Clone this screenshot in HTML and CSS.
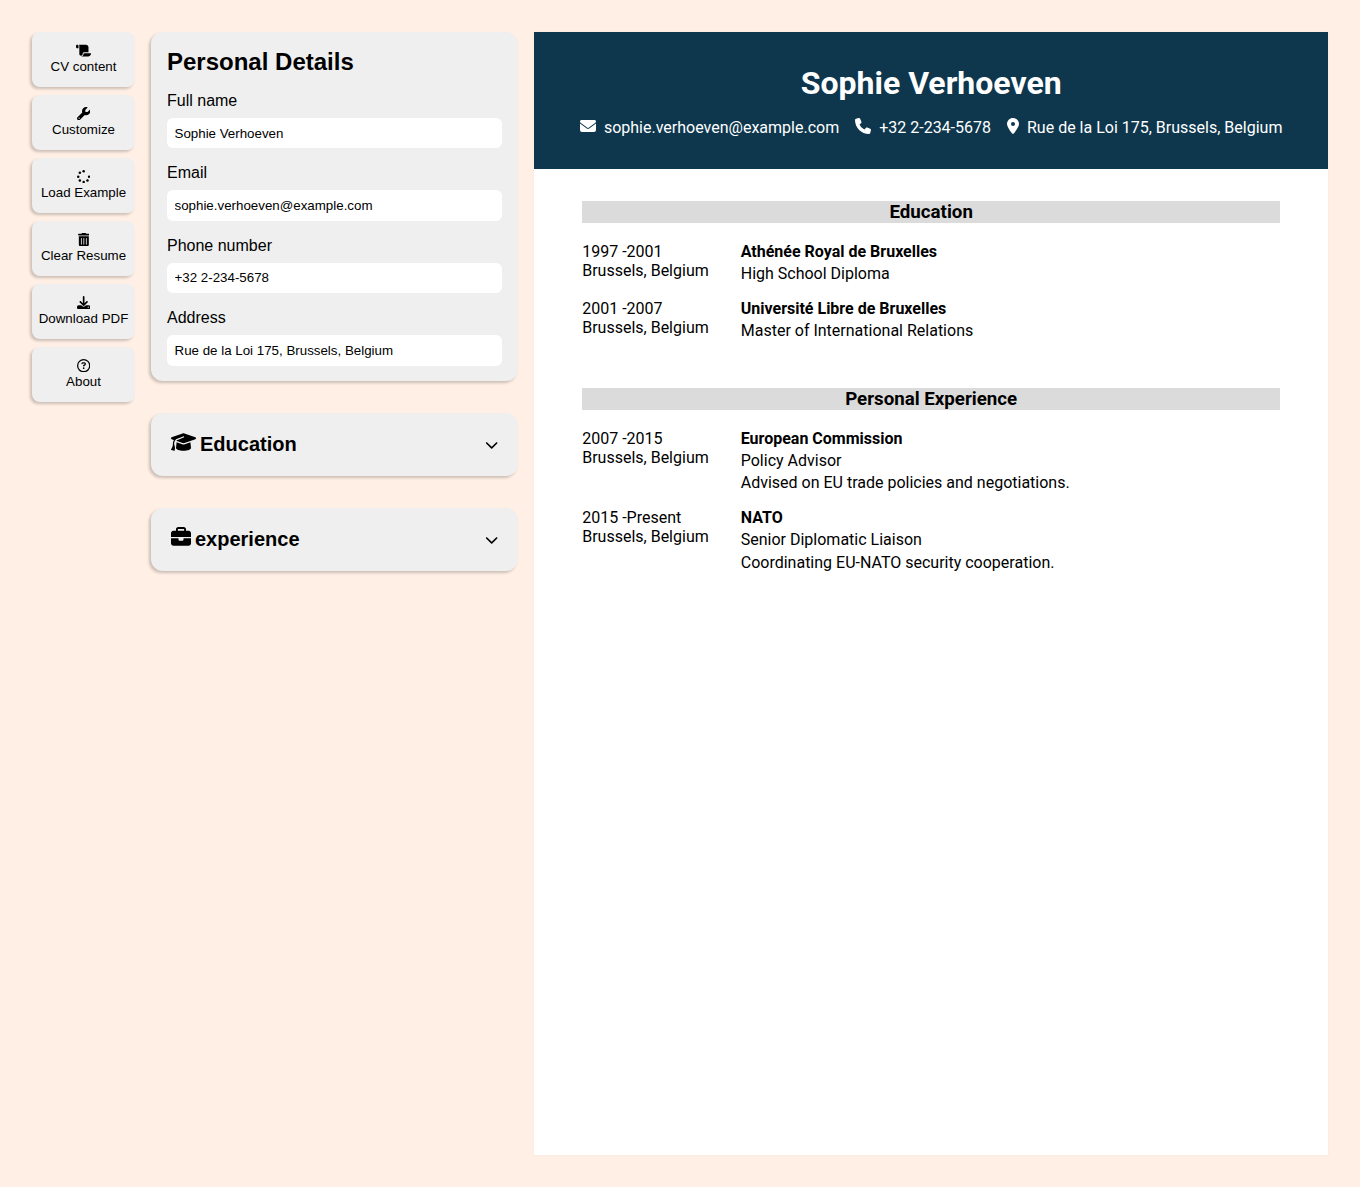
FILE: index.html
```html
<!DOCTYPE html>
<html lang="en">
<head>
<meta charset="utf-8">
<title>CV Builder</title>
<link rel="stylesheet" href="styles.css">
</head>
<body>
<div class="app">
  <nav class="sidebar">
    <button class="nav-button"><svg viewBox="0 0 576 512"><path d="M0 80v48c0 17.700 14.300 32 32 32H96V80c0-26.500-21.500-48-48-48S0 53.500 0 80zM112 32c10 13.400 16 30 16 48V384c0 35.300 28.700 64 64 64s64-28.700 64-64v-5.300c0-32.400 26.300-58.700 58.700-58.700H480V128c0-53-43-96-96-96H112zM464 480c61.900 0 112-50.100 112-112c0-8.800-7.200-16-16-16H314.700c-14.700 0-26.700 11.900-26.700 26.700V384c0 53-43 96-96 96H464z"/></svg>CV content</button>
    <button class="nav-button"><svg viewBox="0 0 512 512"><path d="M352 320c88.400 0 160-71.600 160-160c0-15.300-2.200-30.100-6.200-44.200c-3.100-10.800-16.400-13.200-24.300-5.300l-76.800 76.800c-3 3-7.100 4.700-11.300 4.700H336c-8.800 0-16-7.200-16-16V118.600c0-4.200 1.700-8.300 4.700-11.300l76.800-76.800c7.900-7.900 5.400-21.200-5.300-24.300C382.100 2.200 367.300 0 352 0C263.600 0 192 71.600 192 160c0 19.100 3.400 37.500 9.500 54.500L19.900 396.100C7.200 408.800 0 426.100 0 444.100C0 481.600 30.400 512 67.900 512c18 0 35.300-7.200 48-19.900L297.500 310.500c17 6.200 35.400 9.500 54.500 9.500zM80 408a24 24 0 1 1 0 48 24 24 0 1 1 0-48z"/></svg>Customize</button>
    <button class="nav-button"><svg viewBox="0 0 512 512"><circle cx="256" cy="48" r="48"/><circle cx="464" cy="256" r="48"/><circle cx="403" cy="403" r="48"/><circle cx="256" cy="464" r="48"/><circle cx="109" cy="403" r="48"/><circle cx="48" cy="256" r="48"/><circle cx="109" cy="109" r="48"/></svg>Load Example</button>
    <button class="nav-button"><svg viewBox="0 0 448 512"><path d="M135.200 17.700C140.600 6.800 151.700 0 163.800 0H284.200c12.100 0 23.200 6.800 28.600 17.700L320 32h96c17.700 0 32 14.300 32 32s-14.300 32-32 32H32C14.300 96 0 81.700 0 64S14.300 32 32 32h96l7.200-14.300zM32 128H416V448c0 35.300-28.700 64-64 64H96c-35.300 0-64-28.700-64-64V128zm96 64c-8.800 0-16 7.200-16 16V432c0 8.800 7.200 16 16 16s16-7.200 16-16V208c0-8.800-7.200-16-16-16zm96 0c-8.800 0-16 7.200-16 16V432c0 8.800 7.200 16 16 16s16-7.200 16-16V208c0-8.800-7.200-16-16-16zm96 0c-8.800 0-16 7.200-16 16V432c0 8.800 7.200 16 16 16s16-7.200 16-16V208c0-8.800-7.200-16-16-16z"/></svg>Clear Resume</button>
    <button class="nav-button"><svg viewBox="0 0 512 512"><path d="M288 32c0-17.700-14.300-32-32-32s-32 14.300-32 32V274.700l-73.400-73.400c-12.500-12.500-32.800-12.500-45.300 0s-12.500 32.800 0 45.300l128 128c12.500 12.500 32.800 12.500 45.300 0l128-128c12.500-12.500 12.500-32.800 0-45.300s-32.800-12.500-45.300 0L288 274.700V32zM64 352c-35.300 0-64 28.700-64 64v32c0 35.300 28.700 64 64 64H448c35.300 0 64-28.700 64-64V416c0-35.300-28.700-64-64-64H346.500l-45.300 45.300c-25 25-65.500 25-90.500 0L165.500 352H64zm368 56a24 24 0 1 1 0 48 24 24 0 1 1 0-48z"/></svg>Download PDF</button>
    <button class="nav-button"><svg viewBox="0 0 512 512"><path d="M464 256A208 208 0 1 0 48 256a208 208 0 1 0 416 0zM0 256a256 256 0 1 1 512 0A256 256 0 1 1 0 256zm169.800-90.700c7.900-22.300 29.100-37.300 52.800-37.300h58.300c34.900 0 63.100 28.300 63.100 63.100c0 22.600-12.100 43.500-31.700 54.800L280 264.400c-.2 13-10.900 23.600-24 23.600c-13.300 0-24-10.700-24-24V250.500c0-8.600 4.600-16.500 12.100-20.800l44.300-25.400c4.700-2.700 7.600-7.700 7.600-13.100c0-8.400-6.800-15.100-15.100-15.100H222.600c-3.400 0-6.400 2.100-7.500 5.300l-.4 1.200c-4.400 12.500-18.200 19-30.600 14.600s-19-18.200-14.600-30.600l.4-1.200zM224 352a32 32 0 1 1 64 0 32 32 0 1 1-64 0z"/></svg>About</button>
  </nav>

  <main class="editor">
    <section class="card details">
      <h2>Personal Details</h2>
      <form class="fields">
        <label class="field">Full name<input type="text" value="Sophie Verhoeven"></label>
        <label class="field">Email<input type="text" value="sophie.verhoeven@example.com"></label>
        <label class="field">Phone number<input type="text" value="+32 2-234-5678"></label>
        <label class="field">Address<input type="text" value="Rue de la Loi 175, Brussels, Belgium"></label>
      </form>
    </section>
    <section class="card toggle">
      <svg class="cap" viewBox="0 0 640 512"><path d="M320 32c-8.100 0-16.100 1.400-23.700 4.100L15.800 137.400C6.300 140.900 0 149.900 0 160s6.300 19.100 15.800 22.600l57.900 20.900C57.300 229.300 48 259.800 48 291.900v28.100c0 28.400-10.800 57.700-22.300 80.800c-6.500 13-13.900 25.800-22.500 37.600C0 442.700-.9 448.300 .9 453.400s6 8.900 11.200 10.200l64 16c4.200 1.100 8.700 .3 12.400-2s6.300-6.100 7.100-10.400c8.600-42.800 4.300-81.200-2.100-108.700C90.300 344.300 86 329.800 80 316.500V291.900c0-30.200 10.200-58.700 27.900-81.500c12.900-15.500 29.600-28 49.200-35.700l157-61.700c8.200-3.200 17.500 .8 20.700 9s-.8 17.500-9 20.700l-157 61.700c-12.400 4.900-23.300 12.400-32.200 21.600l159.600 57.600c7.600 2.700 15.600 4.100 23.700 4.100s16.100-1.400 23.700-4.100L624.200 182.600c9.500-3.400 15.800-12.500 15.800-22.600s-6.300-19.100-15.800-22.600L343.700 36.100C336.100 33.400 328.100 32 320 32zM128 408c0 35.300 86 72 192 72s192-36.700 192-72L496.700 262.600 354.500 314c-11.100 4-22.800 6-34.500 6s-23.500-2-34.500-6L143.300 262.600 128 408z"/></svg>
      <h3>Education</h3>
      <svg class="chevron" viewBox="0 0 512 512"><path d="M233.400 406.600c12.500 12.500 32.800 12.500 45.300 0l192-192c12.500-12.500 12.500-32.800 0-45.300s-32.800-12.500-45.300 0L256 338.700 86.600 169.400c-12.500-12.500-32.800-12.500-45.300 0s-12.500 32.800 0 45.300l192 192z"/></svg>
    </section>
    <section class="card toggle">
      <svg class="briefcase" viewBox="0 0 512 512"><path d="M184 48H328c4.400 0 8 3.600 8 8V96H176V56c0-4.400 3.600-8 8-8zm-56 8V96H64C28.700 96 0 124.700 0 160v96H192 320 512V160c0-35.300-28.700-64-64-64H384V56c0-30.900-25.100-56-56-56H184c-30.900 0-56 25.100-56 56zM512 288H320v32c0 17.700-14.300 32-32 32H224c-17.700 0-32-14.300-32-32V288H0V416c0 35.300 28.700 64 64 64H448c35.300 0 64-28.700 64-64V288z"/></svg>
      <h3>experience</h3>
      <svg class="chevron" viewBox="0 0 512 512"><path d="M233.400 406.600c12.500 12.500 32.800 12.500 45.300 0l192-192c12.500-12.500 12.500-32.800 0-45.300s-32.800-12.500-45.300 0L256 338.700 86.600 169.400c-12.500-12.500-32.800-12.500-45.300 0s-12.500 32.800 0 45.300l192 192z"/></svg>
    </section>
  </main>

  <article class="resume">
    <header class="resume-header">
      <h1>Sophie Verhoeven</h1>
      <div class="contacts">
        <div class="contact"><svg class="icon-wide" viewBox="0 0 512 512"><path d="M48 64C21.500 64 0 85.500 0 112c0 15.100 7.100 29.300 19.200 38.400L236.800 313.600c11.400 8.500 27 8.500 38.400 0L492.800 150.400c12.100-9.100 19.200-23.300 19.200-38.400c0-26.500-21.500-48-48-48H48zM0 176V384c0 35.300 28.700 64 64 64H448c35.300 0 64-28.700 64-64V176L294.400 339.200c-22.800 17.100-54 17.100-76.800 0L0 176z"/></svg><span>sophie.verhoeven@example.com</span></div>
        <div class="contact"><svg class="icon-wide" viewBox="0 0 512 512"><path d="M164.900 24.600c-7.700-18.600-28-28.500-47.400-23.200l-88 24C12.100 30.200 0 46 0 64C0 311.400 200.600 512 448 512c18 0 33.800-12.100 38.600-29.500l24-88c5.300-19.400-4.600-39.700-23.200-47.400l-96-40c-16.300-6.800-35.200-2.100-46.300 11.600L304.700 368C234.300 334.700 177.300 277.700 144 207.300L193.300 167c13.700-11.200 18.400-30 11.600-46.300l-40-96z"/></svg><span>+32 2-234-5678</span></div>
        <div class="contact"><svg class="icon-pin" viewBox="0 0 384 512"><path d="M215.700 499.200C267 435 384 279.400 384 192C384 86 298 0 192 0S0 86 0 192c0 87.400 117 243 168.300 307.200c12.300 15.300 35.100 15.300 47.400 0zM192 128a64 64 0 1 1 0 128 64 64 0 1 1 0-128z"/></svg><span>Rue de la Loi 175, Brussels, Belgium</span></div>
      </div>
    </header>
    <div class="resume-body">
      <section>
        <h3 class="bar">Education</h3>
        <div class="entries">
          <div class="entry">
            <div>1997 -2001<br>Brussels, Belgium</div>
            <div class="info"><strong>Athénée Royal de Bruxelles</strong><span>High School Diploma</span></div>
          </div>
          <div class="entry">
            <div>2001 -2007<br>Brussels, Belgium</div>
            <div class="info"><strong>Université Libre de Bruxelles</strong><span>Master of International Relations</span></div>
          </div>
        </div>
      </section>
      <section>
        <h3 class="bar">Personal Experience</h3>
        <div class="entries">
          <div class="entry">
            <div>2007 -2015<br>Brussels, Belgium</div>
            <div class="info"><strong>European Commission</strong><span>Policy Advisor</span><span>Advised on EU trade policies and negotiations.</span></div>
          </div>
          <div class="entry">
            <div>2015 -Present<br>Brussels, Belgium</div>
            <div class="info"><strong>NATO</strong><span>Senior Diplomatic Liaison</span><span>Coordinating EU-NATO security cooperation.</span></div>
          </div>
        </div>
      </section>
    </div>
  </article>
</div>
</body>
</html>
```
FILE: styles.css
```css
* {
  box-sizing: border-box;
  margin: 0;
  padding: 0;
}

body {
  background: #ffefe4;
  color: #000;
  font-family: "Liberation Sans", Arial, sans-serif;
  font-size: 16px;
}

svg {
  display: block;
  flex: none;
  fill: currentColor;
}

.app {
  display: grid;
  grid-template-columns: 103px 367.2px 794px;
  gap: 16px;
  align-items: start;
  padding: 32px;
}

.sidebar {
  display: flex;
  flex-direction: column;
  gap: 8px;
}

.nav-button {
  display: flex;
  flex-direction: column;
  align-items: center;
  height: 55px;
  padding-top: 12px;
  border: 0;
  border-radius: 8px;
  background: #efefef;
  box-shadow: -2px 2px 3px rgba(0, 0, 0, 0.2);
  color: #000;
  font: 13.333px/15px "Liberation Sans", Arial, sans-serif;
  white-space: nowrap;
}

.nav-button svg {
  height: 13.333px;
  margin-bottom: 1.667px;
}

.editor {
  display: flex;
  flex-direction: column;
  gap: 32px;
}

.card {
  border-radius: 12px;
  background: #efefef;
  box-shadow: -2px 2px 3px rgba(0, 0, 0, 0.2);
}

.details {
  padding: 16px 16px 15px;
}

.details h2 {
  margin-bottom: 17px;
  font-size: 24px;
  line-height: 27px;
}

.fields {
  display: flex;
  flex-direction: column;
  gap: 16px;
}

.field {
  display: flex;
  flex-direction: column;
  gap: 8px;
  line-height: 18px;
}

.field input {
  height: 30.4px;
  padding: 0 7.5px;
  border: 0;
  border-radius: 6px;
  background: #fff;
  color: #000;
  font: 13.333px "Liberation Sans", Arial, sans-serif;
}

.toggle {
  display: flex;
  align-items: center;
  gap: 4px;
  height: 63px;
  padding: 0 20px;
}

.toggle h3 {
  font-size: 20px;
  line-height: 23px;
}

.cap {
  width: 25px;
  height: 20px;
  margin-bottom: 4px;
}

.briefcase {
  width: 20px;
  height: 20px;
  margin-bottom: 4px;
}

.chevron {
  width: 13.333px;
  height: 13.333px;
  margin: 2px 0 0 auto;
}

.resume {
  height: 1123px;
  background: #fff;
  box-shadow: 0 0 3px rgba(0, 0, 0, 0.04);
  font-family: Roboto, sans-serif;
  line-height: 19px;
}

.resume-header {
  display: flex;
  flex-direction: column;
  align-items: center;
  gap: 16px;
  height: 137px;
  padding-top: 32px;
  background: #0e374e;
  color: #fff;
}

.resume-header h1 {
  font-size: 32px;
  line-height: 38px;
}

.contacts {
  display: flex;
  gap: 16px;
}

.contact {
  display: flex;
  align-items: flex-start;
  gap: 8px;
}

.icon-wide {
  width: 16px;
  height: 16px;
}

.icon-pin {
  width: 12px;
  height: 16px;
}

.resume-body {
  display: flex;
  flex-direction: column;
  gap: 48px;
  padding: 32px 48px;
}

.bar {
  margin-bottom: 18.72px;
  background: #dbdbdb;
  font-size: 18.72px;
  line-height: 22px;
  text-align: center;
}

.entries {
  display: flex;
  flex-direction: column;
  gap: 16px;
}

.entry {
  display: grid;
  grid-template-columns: auto 1fr;
  column-gap: 32px;
}

.info {
  display: flex;
  flex-direction: column;
  gap: 3.2px;
}
```
